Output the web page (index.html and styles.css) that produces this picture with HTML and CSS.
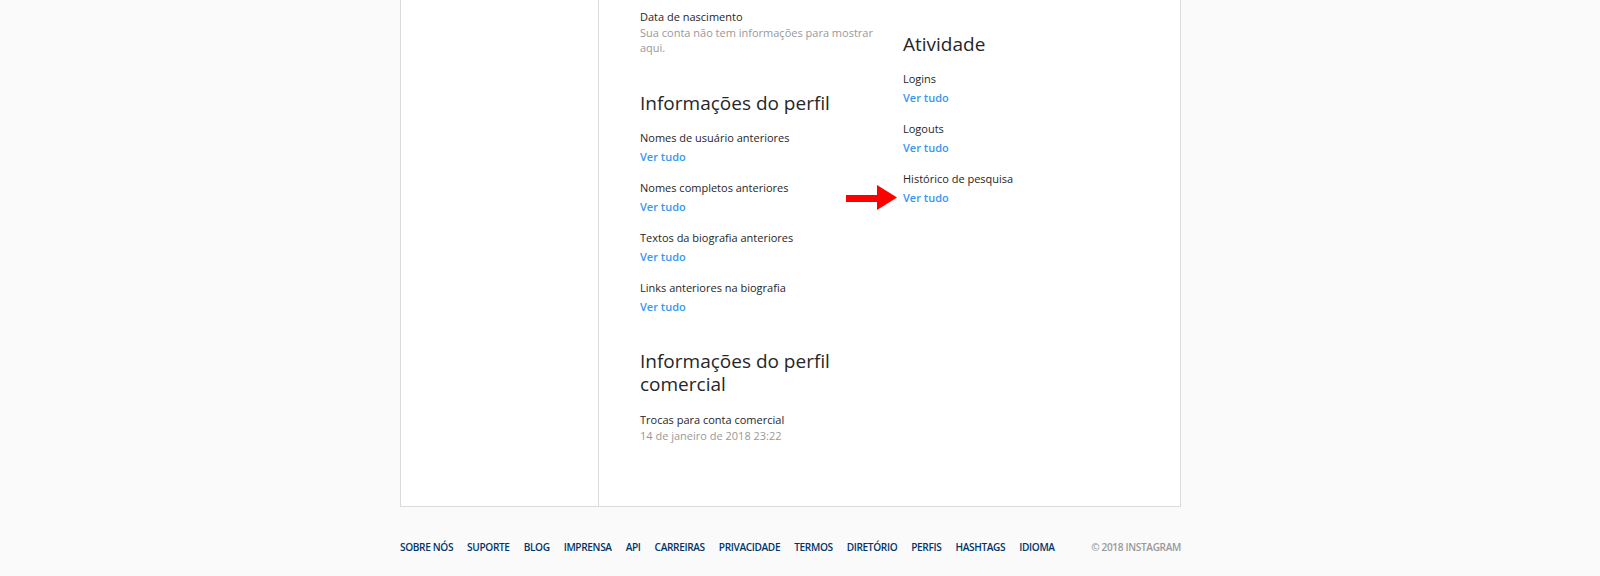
FILE: index.html
```html
<!DOCTYPE html>
<html lang="pt-BR">
<head>
    <meta charset="UTF-8">
    <meta name="viewport" content="width=device-width, initial-scale=1.0">
    <title>Dados da conta • Instagram</title>
    <link rel="stylesheet" href="styles.css">
</head>
<body>
    <div class="page">
        <div class="panel">
            <div class="side-nav"></div>
            <div class="content">
                <div class="column">
                    <div class="item">
                        <div class="label">Data de nascimento</div>
                        <div class="value">Sua conta não tem informações para mostrar aqui.</div>
                    </div>

                    <div class="section">
                        <h2>Informações do perfil</h2>
                        <div class="item">
                            <div class="label">Nomes de usuário anteriores</div>
                            <a class="link" href="#">Ver tudo</a>
                        </div>
                        <div class="item">
                            <div class="label">Nomes completos anteriores</div>
                            <a class="link" href="#">Ver tudo</a>
                        </div>
                        <div class="item">
                            <div class="label">Textos da biografia anteriores</div>
                            <a class="link" href="#">Ver tudo</a>
                        </div>
                        <div class="item">
                            <div class="label">Links anteriores na biografia</div>
                            <a class="link" href="#">Ver tudo</a>
                        </div>
                    </div>

                    <div class="section section-business">
                        <h2>Informações do perfil comercial</h2>
                        <div class="item">
                            <div class="label">Trocas para conta comercial</div>
                            <div class="value">14 de janeiro de 2018 23:22</div>
                        </div>
                    </div>
                </div>

                <div class="column column-right">
                    <div class="section">
                        <h2>Atividade</h2>
                        <div class="item">
                            <div class="label">Logins</div>
                            <a class="link" href="#">Ver tudo</a>
                        </div>
                        <div class="item">
                            <div class="label">Logouts</div>
                            <a class="link" href="#">Ver tudo</a>
                        </div>
                        <div class="item">
                            <div class="label">Histórico de pesquisa</div>
                            <div class="link-wrap">
                                <!-- red arrow pointing at the link -->
                                <svg class="arrow" width="51" height="25" viewBox="0 0 51 25">
                                    <polygon points="0,10 31,10 31,0 51,12.5 31,25 31,17 0,17" fill="#f00"/>
                                </svg>
                                <a class="link" href="#">Ver tudo</a>
                            </div>
                        </div>
                    </div>
                </div>
            </div>
        </div>

        <footer class="footer">
            <nav class="footer-links">
                <a href="#">Sobre nós</a>
                <a href="#">Suporte</a>
                <a href="#">Blog</a>
                <a href="#">Imprensa</a>
                <a href="#">API</a>
                <a href="#">Carreiras</a>
                <a href="#">Privacidade</a>
                <a href="#">Termos</a>
                <a href="#">Diretório</a>
                <a href="#">Perfis</a>
                <a href="#">Hashtags</a>
                <a href="#">Idioma</a>
            </nav>
            <span class="copyright">© 2018 Instagram</span>
        </footer>
    </div>
</body>
</html>
```

FILE: styles.css
```css
body {
    font-family: "Open Sans", Arial, sans-serif;
    margin: 0;
    padding: 0;
    background-color: #fafafa;
    color: #262626;
    font-size: 11px;
}
.page {
    width: 781px;
    margin-left: 400px;
}
.panel {
    display: flex;
    background: white;
    border: 1px solid #dbdbdb;
    border-top: none;
}
.side-nav {
    width: 197px;
    border-right: 1px solid #dbdbdb;
}
.content {
    flex: 1;
    display: flex;
    padding: 9px 0 63px 41px;
}
.column {
    width: 235px;
    padding-right: 28px;
}
.column-right {
    padding-top: 24px;
}
.section {
    margin-top: 37px;
}
.section + .section {
    margin-top: 32px;
}
.column-right .section {
    margin-top: 0;
}
h2 {
    font-size: 19px;
    font-weight: 400;
    line-height: 23px;
    margin: 0 0 15px 0;
    color: #262626;
}
.section-business h2 {
    margin-bottom: 16px;
}
.item + .item {
    margin-top: 12px;
}
.label {
    line-height: 16px;
}
.value {
    line-height: 15px;
    color: #999;
}
.link-wrap {
    position: relative;
}
.link {
    display: block;
    line-height: 22px;
    color: #3897f0;
    font-weight: 600;
    text-decoration: none;
}
.arrow {
    position: absolute;
    right: calc(100% + 6px);
    top: -2px;
}
.footer {
    display: flex;
    justify-content: space-between;
    margin-top: 32px;
    line-height: 16px;
    font-size: 10.1px;
    font-weight: 600;
    letter-spacing: -0.35px;
    text-transform: uppercase;
    white-space: nowrap;
}
.footer-links {
    display: flex;
    gap: 14px;
}
.footer-links a {
    color: #003569;
    text-decoration: none;
}
.copyright {
    color: #999;
}
```
